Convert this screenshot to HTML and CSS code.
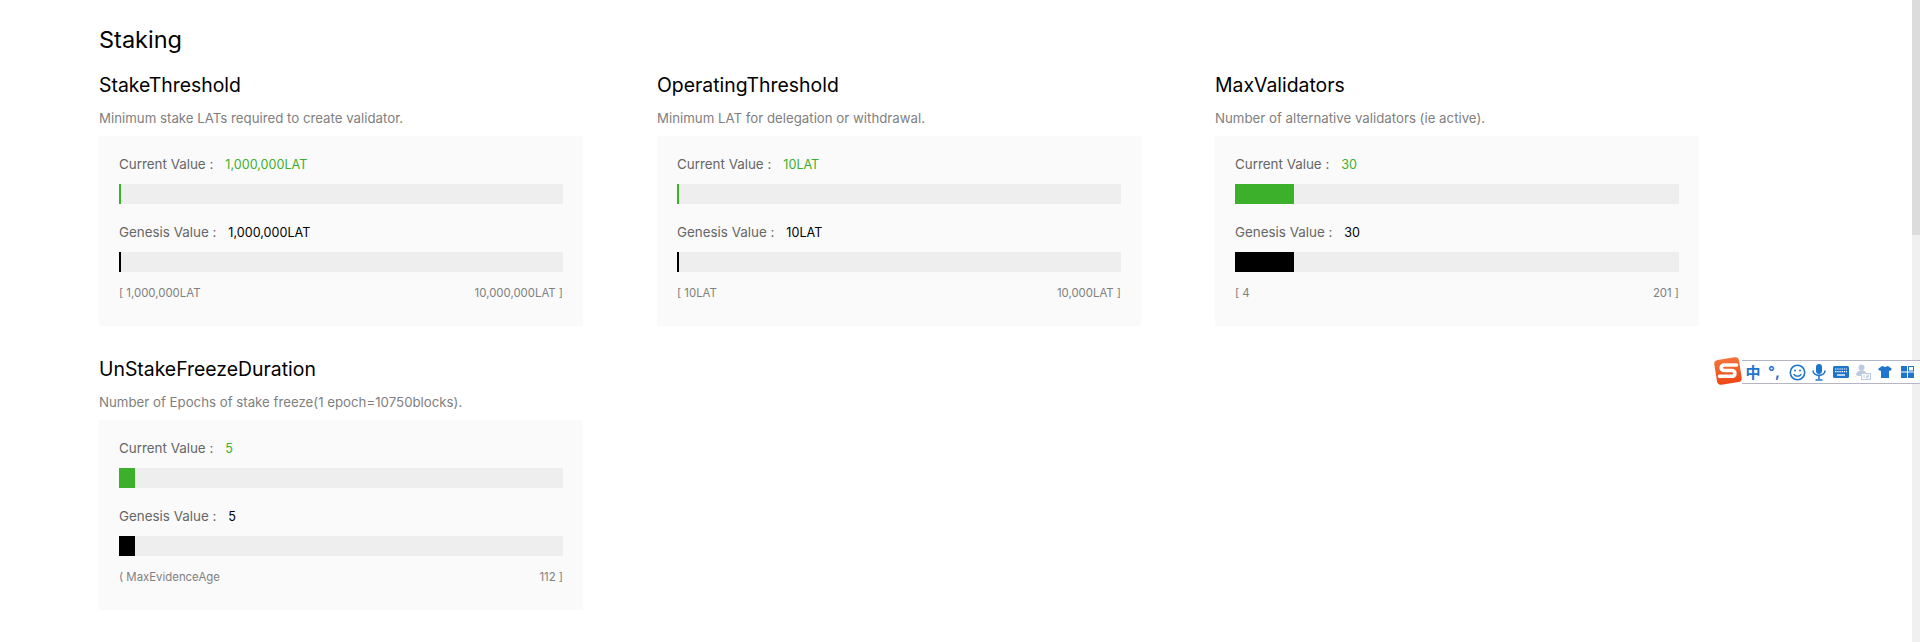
FILE: index.html
```html
<!DOCTYPE html>
<html lang="en">
<head>
    <meta charset="UTF-8">
    <meta name="viewport" content="width=device-width, initial-scale=1.0">
    <title>Staking</title>
    <link rel="stylesheet" href="styles.css">
</head>
<body>
    <div class="page">
        <main class="content">
            <h1 class="title">Staking</h1>
            <div class="param-grid">
                <section class="param">
                    <h2>StakeThreshold</h2>
                    <p class="desc">Minimum stake LATs required to create validator.</p>
                    <div class="card">
                        <div class="value-row">Current Value :<span class="value green">1,000,000LAT</span></div>
                        <div class="bar"><div class="fill green-fill" style="width: 2px"></div></div>
                        <div class="value-row">Genesis Value :<span class="value">1,000,000LAT</span></div>
                        <div class="bar"><div class="fill black-fill" style="width: 2px"></div></div>
                        <div class="range"><span>[ 1,000,000LAT</span><span>10,000,000LAT ]</span></div>
                    </div>
                </section>
                <section class="param">
                    <h2>OperatingThreshold</h2>
                    <p class="desc">Minimum LAT for delegation or withdrawal.</p>
                    <div class="card">
                        <div class="value-row">Current Value :<span class="value green">10LAT</span></div>
                        <div class="bar"><div class="fill green-fill" style="width: 2px"></div></div>
                        <div class="value-row">Genesis Value :<span class="value">10LAT</span></div>
                        <div class="bar"><div class="fill black-fill" style="width: 2px"></div></div>
                        <div class="range"><span>[ 10LAT</span><span>10,000LAT ]</span></div>
                    </div>
                </section>
                <section class="param">
                    <h2>MaxValidators</h2>
                    <p class="desc">Number of alternative validators (ie active).</p>
                    <div class="card">
                        <div class="value-row">Current Value :<span class="value green">30</span></div>
                        <div class="bar"><div class="fill green-fill" style="width: 59px"></div></div>
                        <div class="value-row">Genesis Value :<span class="value">30</span></div>
                        <div class="bar"><div class="fill black-fill" style="width: 59px"></div></div>
                        <div class="range"><span>[ 4</span><span>201 ]</span></div>
                    </div>
                </section>
                <section class="param">
                    <h2>UnStakeFreezeDuration</h2>
                    <p class="desc">Number of Epochs of stake freeze(1 epoch=10750blocks).</p>
                    <div class="card">
                        <div class="value-row">Current Value :<span class="value green">5</span></div>
                        <div class="bar"><div class="fill green-fill" style="width: 16px"></div></div>
                        <div class="value-row">Genesis Value :<span class="value">5</span></div>
                        <div class="bar"><div class="fill black-fill" style="width: 16px"></div></div>
                        <div class="range"><span>( MaxEvidenceAge</span><span>112 ]</span></div>
                    </div>
                </section>
            </div>
        </main>
        <div class="scrollbar"><div class="thumb"></div></div>
    </div>

    <div class="ime">
        <svg class="ime-logo" width="28" height="28" viewBox="0 0 28 28">
            <defs>
                <linearGradient id="logo-fill" x1="0" y1="0" x2="0" y2="1">
                    <stop offset="0" stop-color="#f4733a"/>
                    <stop offset="1" stop-color="#ee4717"/>
                </linearGradient>
            </defs>
            <rect x="1.500" y="1.500" width="25" height="25" rx="4" fill="url(#logo-fill)" transform="rotate(-9 14 14)"/>
            <path d="M22.500 8H10.500C6 8 6 13.500 10.500 13.500H17.500C22 13.500 22 19.300 17.500 19.300H5.500" fill="none" stroke="#fff" stroke-width="3.600" stroke-linecap="round"/>
        </svg>
        <div class="ime-bar">
            <span class="ime-char">中</span>
            <span class="ime-punct">°,</span>
            <svg width="17" height="17" viewBox="0 0 17 17"><circle cx="8.500" cy="8.500" r="7.200" fill="none" stroke="#1f74cc" stroke-width="1.600"/><circle cx="6" cy="6.500" r="1" fill="#1f74cc"/><circle cx="11" cy="6.500" r="1" fill="#1f74cc"/><path d="M4.800 10c1 2.800 6.400 2.800 7.400 0" fill="none" stroke="#1f74cc" stroke-width="1.300"/></svg>
            <svg width="14" height="17" viewBox="0 0 14 17"><rect x="4" y="0" width="6" height="10" rx="3" fill="#1f74cc"/><path d="M1 6.500C1 13 13 13 13 6.500M7 11v4M3.500 16h7" fill="none" stroke="#1f74cc" stroke-width="1.600"/></svg>
            <svg width="16" height="12" viewBox="0 0 16 12"><rect width="16" height="12" rx="1.500" fill="#1f74cc"/><path d="M2 3h12M2 5.700h12" stroke="#fff" stroke-width="1.200" stroke-dasharray="1.400 .8"/><path d="M4 9h8" stroke="#fff" stroke-width="1.400"/></svg>
            <svg width="16" height="16" viewBox="0 0 16 16"><circle cx="6.500" cy="3.500" r="3" fill="#bccbe0"/><path d="M1 11c0-6 10-6 10-2v3H3z" fill="#bccbe0"/><rect x="6.500" y="9.500" width="9" height="6" fill="#fff" stroke="#bccbe0"/><path d="M9 11v3M11.500 11h2v1.500h-2V14h2" fill="none" stroke="#bccbe0"/></svg>
            <svg width="14" height="12" viewBox="0 0 14 12"><path d="M4 0l3 1 3-1 4 3-2 2-1-.5V12H3V4.500L2 5 0 3z" fill="#1f74cc"/></svg>
            <svg width="13" height="12" viewBox="0 0 13 12"><rect width="6" height="5.500" fill="#1f74cc"/><rect x="7.500" y=".5" width="5" height="4.500" fill="#fff" stroke="#1f74cc"/><rect y="6.500" width="6" height="5.500" fill="#1f74cc"/><rect x="7" y="6.500" width="6" height="5.500" fill="#1f74cc"/></svg>
        </div>
    </div>
</body>
</html>
```

FILE: styles.css
```css
* {
    box-sizing: border-box;
}
html, body {
    margin: 0;
    height: 100%;
    overflow: hidden;
}
body {
    font-family: Inter, "Noto Sans", sans-serif;
    color: #000;
    background: #fff;
}
.page {
    display: flex;
    height: 642px;
}
.content {
    flex: 1;
    padding: 24px 0 0 99px;
}
.title {
    margin: 0;
    font-size: 23.500px;
    line-height: 32px;
    font-weight: 400;
}
.param-grid {
    display: grid;
    grid-template-columns: repeat(3, 484px);
    column-gap: 74px;
    row-gap: 28px;
    margin-top: 14px;
}
.param h2 {
    margin: 0;
    font-size: 19.400px;
    line-height: 30px;
    font-weight: 400;
}
.desc {
    margin: 8px 0 8px;
    font-size: 13.250px;
    line-height: 20px;
    color: #808080;
}
.card {
    height: 190px;
    padding: 16px 20px 0;
    background: #fafafa;
}
.value-row {
    height: 32px;
    font-size: 13.400px;
    line-height: 24px;
    color: #666;
}
.value {
    margin-left: 12px;
    font-size: 12.600px;
    color: #000;
}
.value.green {
    color: #3cb02a;
}
.bar {
    height: 20px;
    margin-bottom: 16px;
    background: #eee;
}
.fill {
    height: 100%;
}
.green-fill {
    background: #3cb02a;
}
.black-fill {
    background: #000;
}
.range {
    display: flex;
    justify-content: space-between;
    margin-top: -4px;
    font-size: 11.400px;
    line-height: 18px;
    color: #808080;
}
.scrollbar {
    width: 8px;
    background: #f0f0f0;
}
.thumb {
    height: 235px;
    background: #dcdcdc;
}
.ime {
    position: absolute;
    left: 1714px;
    top: 357px;
    display: flex;
    align-items: center;
    width: 206px;
    height: 28px;
}
.ime-logo {
    position: relative;
    z-index: 1;
    flex: none;
}
.ime-bar {
    display: grid;
    grid-template-columns: repeat(8, 22px);
    align-items: center;
    justify-items: center;
    flex: 1;
    height: 24px;
    margin-top: 2px;
    background: #fff;
    border-top: 1px solid #b4b6c4;
    border-bottom: 1px solid #b4b6c4;
}
.ime-char {
    font-family: "Noto Sans CJK SC", sans-serif;
    font-size: 15px;
    line-height: 20px;
    font-weight: 700;
    color: #1f74cc;
}
.ime-punct {
    font-size: 15px;
    line-height: 20px;
    font-weight: 700;
    letter-spacing: 2px;
    color: #1f74cc;
}
```
